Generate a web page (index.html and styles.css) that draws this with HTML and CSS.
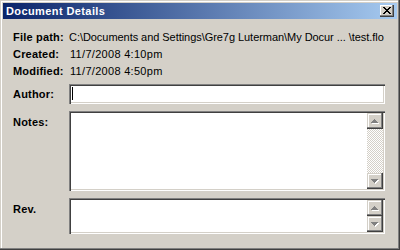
FILE: index.html
```html
<!DOCTYPE html>
<html lang="en">
<head>
    <meta charset="UTF-8">
    <title>Document Details</title>
    <link rel="stylesheet" href="styles.css">
</head>
<body>
<div class="window">
    <div class="titlebar">
        <span class="title">Document Details</span>
        <div class="close-btn">
            <svg width="14" height="12" viewBox="0 0 14 12" shape-rendering="crispEdges">
                <path fill="#000" d="M3 2h2v1H3zM9 2h2v1H9zM4 3h2v1H4zM8 3h2v1H8zM5 4h4v1H5zM6 5h2v1H6zM5 6h4v1H5zM4 7h2v1H4zM8 7h2v1H8zM3 8h2v1H3zM9 8h2v1H9z"/>
            </svg>
        </div>
    </div>
    <div class="content">
        <div class="info-row"><span class="label">File path:</span><span class="value path">C:\Documents and Settings\Gre7g Luterman\My Docur ... \test.flo</span></div>
        <div class="info-row"><span class="label">Created:</span><span class="value date">11/7/2008 4:10pm</span></div>
        <div class="info-row"><span class="label">Modified:</span><span class="value date">11/7/2008 4:50pm</span></div>

        <div class="field-row author-row">
            <label class="label">Author:</label>
            <div class="field author-field"><span class="caret"></span></div>
        </div>

        <div class="field-row notes-row">
            <label class="label top">Notes:</label>
            <div class="field notes-field">
                <div class="text-area"></div>
                <div class="scrollbar">
                    <div class="scroll-btn">
                        <svg width="16" height="16" viewBox="0 0 16 16" shape-rendering="crispEdges">
                            <path fill="#fff" d="M8 7h1v1H8zM7 8h3v1H7zM6 9h5v1H6zM5 10h7v1H5z"/>
                            <path fill="#808080" d="M7 6h1v1H7zM6 7h3v1H6zM5 8h5v1H5zM4 9h7v1H4z"/>
                        </svg>
                    </div>
                    <div class="track"></div>
                    <div class="scroll-btn">
                        <svg width="16" height="16" viewBox="0 0 16 16" shape-rendering="crispEdges">
                            <path fill="#fff" d="M5 7h7v1H5zM6 8h5v1H6zM7 9h3v1H7zM8 10h1v1H8z"/>
                            <path fill="#808080" d="M4 6h7v1H4zM5 7h5v1H5zM6 8h3v1H6zM7 9h1v1H7z"/>
                        </svg>
                    </div>
                </div>
            </div>
        </div>

        <div class="field-row rev-row">
            <label class="label top">Rev.</label>
            <div class="field rev-field">
                <div class="text-area"></div>
                <div class="scrollbar">
                    <div class="scroll-btn">
                        <svg width="16" height="16" viewBox="0 0 16 16" shape-rendering="crispEdges">
                            <path fill="#fff" d="M8 7h1v1H8zM7 8h3v1H7zM6 9h5v1H6zM5 10h7v1H5z"/>
                            <path fill="#808080" d="M7 6h1v1H7zM6 7h3v1H6zM5 8h5v1H5zM4 9h7v1H4z"/>
                        </svg>
                    </div>
                    <div class="scroll-btn">
                        <svg width="16" height="16" viewBox="0 0 16 16" shape-rendering="crispEdges">
                            <path fill="#fff" d="M5 7h7v1H5zM6 8h5v1H6zM7 9h3v1H7zM8 10h1v1H8z"/>
                            <path fill="#808080" d="M4 6h7v1H4zM5 7h5v1H5zM6 8h3v1H6zM7 9h1v1H7z"/>
                        </svg>
                    </div>
                </div>
            </div>
        </div>
    </div>
</div>
</body>
</html>
```

FILE: styles.css
```css
body {
    margin: 0;
    font-family: "Liberation Sans", Arial, sans-serif;
    font-size: 11px;
    color: #000;
    background-color: #d4d0c8;
}
.window {
    width: 400px;
    height: 250px;
    box-sizing: border-box;
    padding: 3px;
    background-color: #d4d0c8;
    box-shadow: inset -1px -1px 0 #404040, inset -2px -2px 0 #808080,
                inset 1px 1px 0 #d4d0c8, inset 2px 2px 0 #fff;
    display: flex;
    flex-direction: column;
}
.titlebar {
    height: 16px;
    display: flex;
    align-items: center;
    justify-content: space-between;
    padding: 0 3px 0 3px;
    background: linear-gradient(to right, #0a246a, #a6caf0);
}
.title {
    color: #fff;
    font-weight: bold;
    font-size: 11px;
    letter-spacing: 0.4px;
}
.close-btn {
    width: 14px;
    height: 12px;
    background-color: #d4d0c8;
    box-shadow: inset -1px -1px 0 #404040, inset -2px -2px 0 #808080, inset 1px 1px 0 #fff;
}
.close-btn svg {
    display: block;
}
.content {
    padding: 10px 12px 0 10px;
    display: flex;
    flex-direction: column;
}
.info-row {
    display: flex;
    height: 17px;
    line-height: 17px;
    white-space: nowrap;
}
.label {
    width: 56px;
    flex-shrink: 0;
    font-weight: bold;
    letter-spacing: 0.2px;
}
.path {
    letter-spacing: -0.05px;
}
.date {
    padding-left: 1px;
    letter-spacing: 0.3px;
}
.field-row {
    display: flex;
}
.author-row {
    margin-top: 4px;
    align-items: center;
}
.notes-row,
.rev-row {
    margin-top: 7px;
}
.label.top {
    padding-top: 5px;
    line-height: 13px;
}
.field {
    flex: 1;
    box-sizing: border-box;
    padding: 2px;
    background-color: #fff;
    box-shadow: inset 1px 1px 0 #808080, inset 2px 2px 0 #404040,
                inset -1px -1px 0 #fff, inset -2px -2px 0 #d4d0c8;
    display: flex;
}
.author-field {
    height: 20px;
    padding: 3px 3px 3px 3px;
}
.caret {
    width: 1px;
    height: 13px;
    background-color: #000;
}
.notes-field {
    height: 80px;
}
.rev-field {
    height: 36px;
}
.text-area {
    flex: 1;
}
.scrollbar {
    width: 16px;
    display: flex;
    flex-direction: column;
}
.scroll-btn {
    width: 16px;
    height: 16px;
    flex-shrink: 0;
    background-color: #d4d0c8;
    box-shadow: inset -1px -1px 0 #404040, inset -2px -2px 0 #808080,
                inset 1px 1px 0 #d4d0c8, inset 2px 2px 0 #fff;
}
.scroll-btn svg {
    display: block;
}
.track {
    flex: 1;
    background: repeating-conic-gradient(#fff 0 25%, #d4d0c8 0 50%) 0 0 / 2px 2px;
}
```
